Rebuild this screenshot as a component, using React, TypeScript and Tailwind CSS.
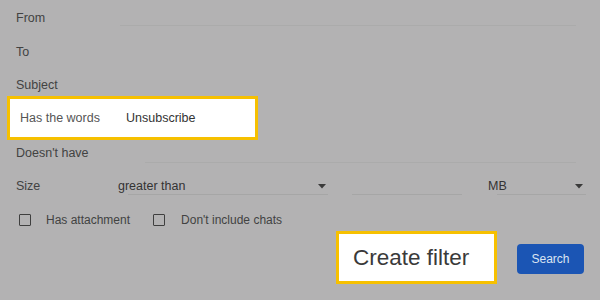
import React from "react";

const Caret = () => (
  <svg width="8" height="5" viewBox="0 0 8 5" className="shrink-0">
    <path d="M0 0 L8 0 L4 4.5 Z" fill="#3a3a3a" />
  </svg>
);

const Box = () => (
  <div className="w-[12px] h-[12px] border-[1.5px] border-[#3f3f3f] rounded-[1px] shrink-0" />
);

export default function App() {
  return (
    <div
      className="w-[600px] h-[300px] overflow-hidden bg-[#b3b2b3] text-[#424242] text-[12.5px]"
      style={{ fontFamily: '"Liberation Sans", Arial, sans-serif' }}
    >
      <div className="flex flex-col pt-[1px]">
        {/* From */}
        <div className="flex h-[34px]">
          <div className="w-[120px] pl-4 flex items-center">From</div>
          <div className="flex-1 mr-[24px] mt-[24px] h-px bg-[#ababab]" />
        </div>
        {/* To */}
        <div className="flex h-[34px] items-center pl-4">To</div>
        {/* Subject */}
        <div className="flex h-[22px] mt-[5px] items-center pl-4">Subject</div>
        {/* Has the words */}
        <div className="ml-[7px] w-[251px] h-[44px] border-[3px] border-[#f6c000] bg-white flex items-center pl-[10px]">
          <span className="w-[106px] text-[#555]">Has the words</span>
          <span className="text-[#333]">Unsubscribe</span>
        </div>
        {/* Doesn't have */}
        <div className="flex h-[26px]">
          <div className="w-[145px] pl-4 flex items-center">Doesn't have</div>
          <div className="flex-1 mr-[24px] mt-[22px] h-px bg-[#ababab]" />
        </div>
        {/* Size */}
        <div className="flex h-[40px] items-center">
          <div className="w-[118px] pl-4">Size</div>
          <div className="relative w-[210px] h-[40px] flex items-center">
            <span className="text-[#333]">greater than</span>
            <div className="ml-auto mr-[2px]">
              <Caret />
            </div>
            <div className="absolute left-[10px] right-0 top-[28px] h-px bg-[#a6a6a6]" />
          </div>
          <div className="ml-[24px] w-[110px] h-[40px] flex flex-col">
            <div className="mt-[28px] h-px bg-[#a6a6a6]" />
          </div>
          <div className="relative ml-[26px] w-[98px] h-[40px] flex items-center">
            <span className="text-[#333]">MB</span>
            <div className="ml-auto mr-[3px]">
              <Caret />
            </div>
            <div className="absolute left-[9px] right-0 top-[28px] h-px bg-[#a6a6a6]" />
          </div>
        </div>
        {/* Checkboxes */}
        <div className="flex h-[26px] items-center pl-[19px] pt-[2px] text-[12px]">
          <Box />
          <span className="ml-[15px]">Has attachment</span>
          <div className="ml-[23px]">
            <Box />
          </div>
          <span className="ml-[16px]">Don't include chats</span>
        </div>
        {/* Bottom */}
        <div className="flex items-center -mt-[1px]">
          <div className="ml-[336px] w-[161px] h-[53px] border-[3px] border-[#f6c000] bg-white flex items-center pl-[14px] text-[22.5px] text-[#3a3a3a]">
            Create filter
          </div>
          <div className="ml-[20px] w-[67px] h-[30px] rounded-[4px] bg-[#1b55b4] flex items-center justify-center text-[12px] text-[#dbe4f2] mt-[3px]">
            Search
          </div>
        </div>
      </div>
    </div>
  );
}
